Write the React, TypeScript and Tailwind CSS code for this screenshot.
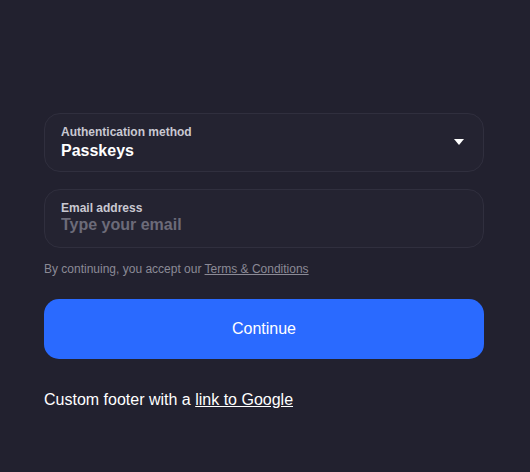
import { useState } from 'react';

const FONT = { fontFamily: '"Liberation Sans", Arial, sans-serif' };

export default function App() {
  const [email, setEmail] = useState('');

  return (
    <div className="min-h-[472px] w-full bg-[#22212f] pl-[44px]" style={FONT}>
      <div className="w-[440px] pt-[113px] flex flex-col">
        {/* method select */}
        <button className="flex items-center justify-between h-[59px] rounded-[16px] border border-[#302f3e] bg-[#242331] pl-4 pr-[19px] text-left">
          <div className="flex flex-col">
            <span className="mb-[2px] text-[12px] leading-[14px] font-bold text-[#c9c8d1]">
              Authentication method
            </span>
            <span className="text-[16px] leading-[20px] font-bold text-white">
              Passkeys
            </span>
          </div>
          <svg width="10" height="6" viewBox="0 0 10 6" className="mt-[-1px]">
            <path d="M0 0h10L5 6z" fill="#ffffff" />
          </svg>
        </button>

        {/* email field */}
        <label className="mt-[17px] flex flex-col justify-center h-[59px] rounded-[16px] border border-[#302f3e] bg-[#242331] px-4">
          <span className="text-[12px] leading-[14px] font-bold text-[#c9c8d1]">
            Email address
          </span>
          <input
            value={email}
            onChange={(e) => setEmail(e.target.value)}
            placeholder="Type your email"
            className="mb-[2px] bg-transparent outline-none text-[16px] leading-[20px] font-bold text-white placeholder:text-[#6c6b79]"
          />
        </label>

        <p className="mt-[13px] text-[12px] leading-[16px] text-[#8b8a96]">
          By continuing, you accept our{' '}
          <a href="#" className="underline">
            Terms &amp; Conditions
          </a>
        </p>

        <button className="mt-[22px] h-[60px] rounded-[15px] bg-[#2a6aff] text-white text-[16px]">
          Continue
        </button>

        <p className="mt-[29px] text-[16px] leading-[24px] text-white">
          Custom footer with a{' '}
          <a href="#" className="underline">
            link to Google
          </a>
        </p>
      </div>
    </div>
  );
}
